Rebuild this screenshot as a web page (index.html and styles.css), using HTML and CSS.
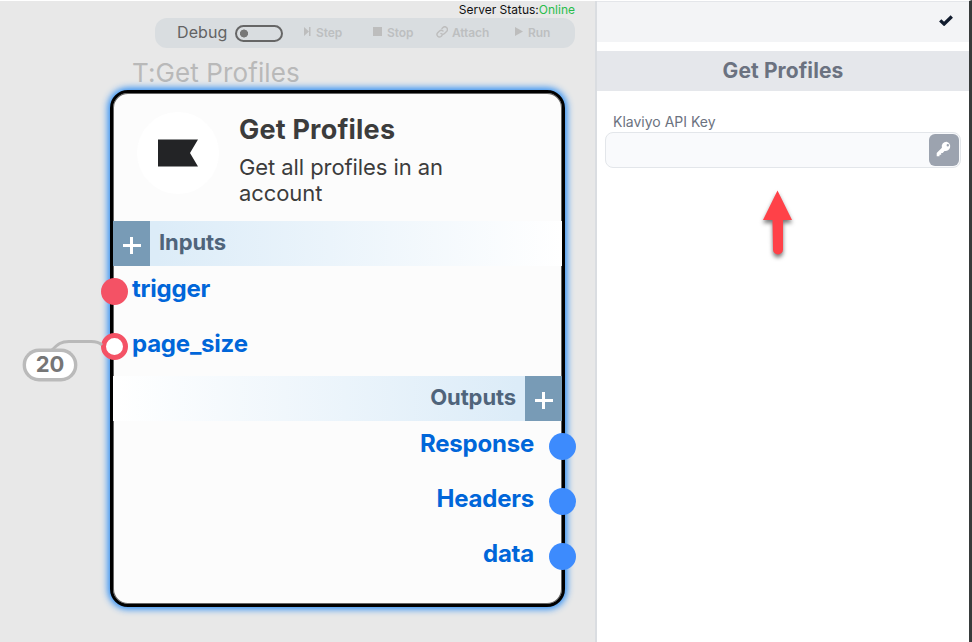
FILE: index.html
```html
<!DOCTYPE html>
<html lang="en">
<head>
<meta charset="utf-8">
<title>Get Profiles</title>
<link rel="stylesheet" href="styles.css">
</head>
<body>
<div class="app">
  <main class="canvas">
    <div class="status"><span>Server Status:</span><span class="online">Online</span></div>
    <div class="toolbar">
      <span class="debug">Debug</span>
      <span class="toggle"></span>
      <span class="tool step"><svg width="7" height="9" viewBox="0 0 7 9"><path d="M0 0L5 4.5L0 9ZM5 0H6.5V9H5Z"/></svg><span>Step</span></span>
      <span class="tool stop"><svg width="9" height="9" viewBox="0 0 9 9"><path d="M0 0H9V9H0Z"/></svg><span>Stop</span></span>
      <span class="tool attach"><svg width="12" height="12" viewBox="0 0 24 24"><path class="line" d="M10 15a5 5 0 0 0 7 0l4-4a5 5 0 0 0-7-8l-2 2M14 10a5 5 0 0 0-7 0l-4 4a5 5 0 0 0 7 7l2-2"/></svg><span>Attach</span></span>
      <span class="tool run"><svg width="8" height="9" viewBox="0 0 8 9"><path d="M0 0L8 4.5L0 9Z"/></svg><span>Run</span></span>
    </div>
    <div class="node-title">T:Get Profiles</div>
    <section class="node">
      <header class="node-head">
        <div class="logo"><svg width="40" height="28" viewBox="0 0 40 28"><path d="M0 0.5H40L32 14L40 27.5H0Z"/></svg></div>
        <div class="node-text">
          <h1>Get Profiles</h1>
          <p>Get all profiles in an account</p>
        </div>
      </header>
      <div class="band inputs"><span class="add"></span><span class="band-name">Inputs</span></div>
      <div class="ports in">
        <div class="port"><span>trigger</span><i class="dot red"></i></div>
        <div class="port"><span>page_size</span><i class="dot ring"></i></div>
      </div>
      <div class="band outputs"><span class="band-name">Outputs</span><span class="add"></span></div>
      <div class="ports out">
        <div class="port"><span>Response</span><i class="dot blue"></i></div>
        <div class="port"><span>Headers</span><i class="dot blue"></i></div>
        <div class="port"><span>data</span><i class="dot blue"></i></div>
      </div>
    </section>
    <svg class="wire" width="60" height="20" viewBox="0 0 60 20"><path d="M2 12C8 6 11 3.5 19 3.5H41C46 3.5 49 4 52 7"/></svg>
    <div class="value">20</div>
  </main>
  <aside class="panel">
    <div class="panel-top"><svg width="14" height="11" viewBox="0 0 14 11"><path d="M1.2 5.4L5.1 9L12.8 1.5"/></svg></div>
    <h2>Get Profiles</h2>
    <div class="field">
      <label>Klaviyo API Key</label>
      <div class="input"><button type="button" class="key" aria-label="Key"><svg width="16" height="16" viewBox="0 0 16 16"><path fill-rule="evenodd" d="M10.5 0.7a4.7 4.7 0 0 0-4.6 6L0.7 12V15.3H3.5V13.7H5.2V12H6.7L8.5 9.9A4.7 4.7 0 1 0 10.5 0.7ZM11.8 3a1.2 1.2 0 1 1 0 2.4a1.2 1.2 0 0 1 0-2.4Z"/></svg></button></div>
    </div>
    <svg class="arrow" width="50" height="80" viewBox="0 0 50 80"><path d="M24.5 10.5L39 40H30V69.5A5 5 0 0 1 20 69.5L19.5 40H10Z"/></svg>
  </aside>
</div>
</body>
</html>
```
FILE: styles.css
```css
* { box-sizing: border-box; }
body { margin: 0; font-family: Inter, "Liberation Sans", sans-serif; background: #fff; }
svg { display: block; flex: none; }
h1, h2, p { margin: 0; }
.app { display: flex; width: 972px; height: 642px; overflow: hidden; border-top: 1px solid #fff; border-right: 3px solid #373b3b; }
.canvas { position: relative; flex: none; width: 597px; background: #e8e8e8; border-right: 2px solid #dadde1; }
.status { display: flex; justify-content: flex-end; height: 17px; padding-right: 20px; font-size: 12px; line-height: 17px; color: #111; }
.online { color: #28bd4b; }
.toolbar { display: flex; align-items: center; width: 420px; height: 30px; margin-left: 155px; padding: 0 0 1px 22px; border-radius: 12px; background: #d9dde0; }
.debug { width: 58px; margin-top: -1px; font-size: 16px; color: #636363; letter-spacing: 0.1px; }
.toggle { width: 48px; height: 17px; margin-top: 1px; border: 2px solid #666; border-radius: 9px; background: radial-gradient(circle at 7px 6.5px, #777 3.7px, transparent 4.3px); }
.tool { display: flex; align-items: center; gap: 5px; font-size: 12px; font-weight: 600; letter-spacing: -0.1px; color: #bdbfc0; fill: #bdbdbd; }
.tool svg { position: relative; top: -1px; }
.step { width: 69px; margin-left: 21px; }
.stop { width: 63px; }
.attach { width: 79px; gap: 4px; }
.run { gap: 5px; }
.line { fill: none; stroke: #bdbdbd; stroke-width: 2.8; stroke-linecap: round; }
.node-title { height: 42px; padding: 8px 0 0 132px; font-size: 26px; line-height: 34px; letter-spacing: 0.1px; color: #b9b9b9; }
.node { position: absolute; left: 110px; top: 89px; width: 455px; height: 517px; border: 3px solid #000; border-radius: 18px; background: #fcfcfc; box-shadow: inset 0 0 0 1px #666, 0 0 7px 2px #2389f5; }
.node-head { display: flex; height: 128px; padding: 19px 0 0 24px; }
.logo { display: flex; align-items: center; justify-content: center; width: 82px; height: 82px; border-radius: 50%; background: #fff; fill: #232426; }
.node-text { width: 240px; margin-left: 20px; color: #3c3c3c; }
h1 { padding-top: 1px; font-size: 27px; line-height: 34px; font-weight: 700; letter-spacing: 0.2px; }
.node-text p { margin-top: 7px; font-size: 22px; line-height: 26px; letter-spacing: -0.08px; }
.band { display: flex; height: 45px; font-size: 22px; line-height: 43px; font-weight: 700; letter-spacing: -0.1px; color: #4f647b; }
.inputs { background: linear-gradient(90deg, #dcecf8, #dcecf8 10%, #fff); }
.outputs { justify-content: flex-end; background: linear-gradient(270deg, #dcecf8, #dcecf8 10%, #fff); }
.band-name { padding: 0 9px; }
.add { width: 37px; background: linear-gradient(#fff, #fff) 50% 23px / 18px 3px no-repeat, linear-gradient(#fff, #fff) 50% 16px / 3px 17px no-repeat, #789bb6; }
.ports { font-size: 24px; line-height: 45px; font-weight: 700; letter-spacing: -0.22px; color: #0066d9; }
.port { position: relative; height: 55px; }
.in .port { padding-left: 19px; }
.out .port { padding-right: 28px; text-align: right; }
.dot { position: absolute; top: 11.5px; width: 27px; height: 27px; border-radius: 50%; }
.in .dot { left: -12.5px; }
.out .dot { right: -14px; }
.red { background: #f45265; }
.ring { background: #fff; border: 5px solid #f45265; }
.blue { background: #3d8bfd; }
.wire { position: absolute; left: 50px; top: 337px; fill: none; stroke: #b9b9b9; stroke-width: 3; }
.value { position: absolute; left: 23px; top: 347.5px; width: 54px; height: 32.5px; border: 3px solid #bababa; border-radius: 17px; background: #fff; text-align: center; font-size: 22px; line-height: 25px; font-weight: 700; color: #767676; box-shadow: 0 0 0 0.4px #bababa; }
.panel { position: relative; width: 372px; background: #fff; border-top: 1px solid #e4e6ea; }
.panel-top { display: flex; justify-content: flex-end; height: 40px; padding: 13px 16px 0 0; background: #f3f4f6; fill: none; stroke: #111c2e; stroke-width: 3.3; }
h2 { height: 40px; margin-top: 9px; background: #e5e7eb; text-align: center; font-size: 21px; line-height: 39px; font-weight: 700; letter-spacing: 0.1px; color: #6b7280; }
.field { padding: 22px 8px 0; }
label { display: block; padding-left: 8px; height: 19px; font-size: 14px; line-height: 18px; color: #6b7280; }
.input { display: flex; justify-content: flex-end; width: 356px; height: 36px; padding: 1px; border: 1px solid #e3e6ea; border-radius: 8px; background: #f9fafc; }
.key { display: flex; width: 30px; height: 32px; padding: 7px 7px; border: 0; border-radius: 6px; background: #9ca3af; fill: #fff; }
.arrow { position: absolute; left: 155.5px; top: 178px; overflow: visible; fill: #ff4148; filter: drop-shadow(0 3px 2px #0008); }
```
